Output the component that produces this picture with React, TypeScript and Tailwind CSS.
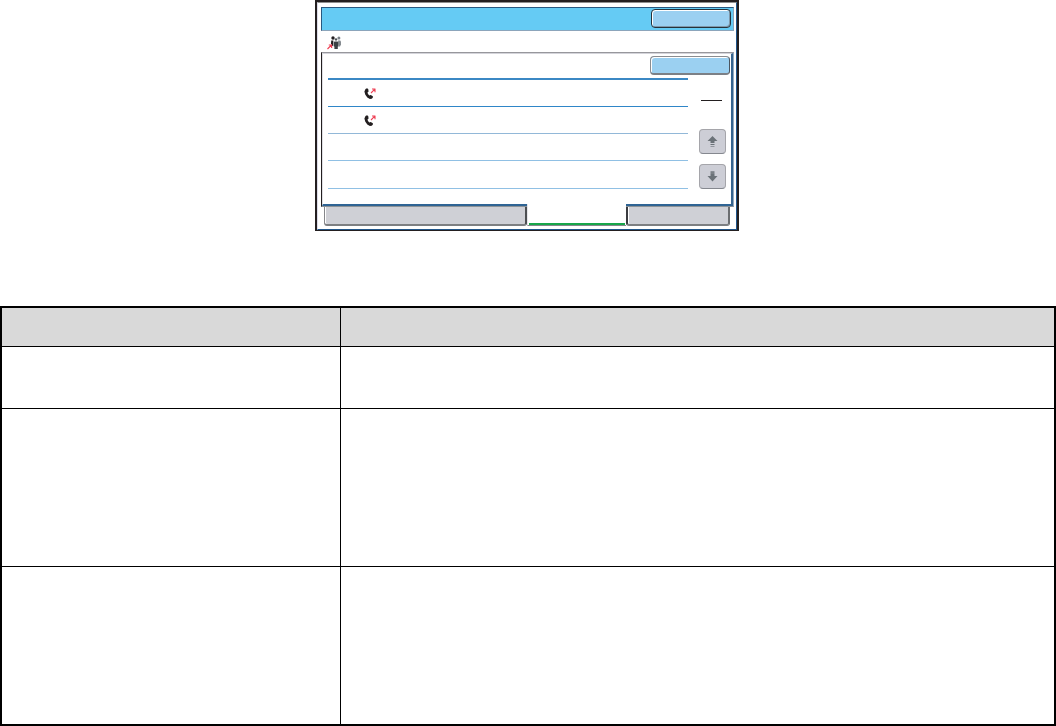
import type { ReactNode } from 'react';

interface KeyProps {
    label: string;
    className?: string;
}

// Glossy blue key in the header and list area
function BlueKey({ label, className = '' }: KeyProps) {
    return (
        <button
            type="button"
            aria-label={label}
            className={`block h-[19px] w-20 shrink-0 rounded-[4px] border bg-[#9bd0f1] ${className}`}
        />
    );
}

function ScrollKey({ label, children }: { label: string; children: ReactNode }) {
    return (
        <button
            type="button"
            aria-label={label}
            className="flex h-[25px] w-[27px] items-center justify-center rounded-[4px] border border-[#a5a5aa] border-b-[#85888f] bg-[#cdced6]"
        >
            {children}
        </button>
    );
}

function ArrowUp() {
    return (
        <svg width="11" height="11" viewBox="0 0 11 11" fill="#6b7278" aria-hidden="true">
            <path d="M5.5 0 10.5 5H7.5V7H3.5V5H.5Z" />
            <path d="M3.5 8H7.5V9H3.5Z" />
            <path d="M3.5 10H7.5V11H3.5Z" opacity=".6" />
        </svg>
    );
}

function ArrowDown() {
    return (
        <svg width="11" height="11" viewBox="0 0 11 11" fill="#6b7278" aria-hidden="true">
            <path d="M3.5 0H7.5V1H3.5Z" opacity=".7" />
            <path d="M3.5 1H7.5V3H3.5Z" opacity=".85" />
            <path d="M3.5 3H7.5V5H10.5L5.5 10.5.5 5H3.5Z" />
        </svg>
    );
}

function PhoneIcon() {
    return (
        <svg width="13" height="12" viewBox="0 0 13 12" aria-hidden="true">
            <path
                d="M1.5 1 3 .3 4.2 1 4.6 3.4 3.5 4.6 4 6.1 5.3 7.6 6.7 7 8.9 8.3 8.8 9.7 7.7 10.7 5.9 10.9 3.3 9.4 1.2 6.6.4 3.6Z"
                fill="#231f20"
            />
            <path d="M7 5 10.8 1.2M8 1H11.3M11 .8V4.2" fill="none" stroke="#ee4055" strokeWidth="1.1" />
        </svg>
    );
}

function GroupIcon() {
    return (
        <svg width="15" height="14" viewBox="0 0 15 14" aria-hidden="true">
            <circle cx="11.9" cy="2" r="1.5" fill="#7b8288" />
            <path d="M11 4.4H13.2L14 5.5V8.5L13 10.5H11.6Z" fill="#858b90" />
            <circle cx="6" cy="2" r="1.7" fill="#231f20" />
            <path d="M4.2 4.4H6.4L6.2 10H5.4L4 7.5Z" fill="#231f20" />
            <circle cx="9" cy="3.4" r="1.2" fill="#4a5054" />
            <path d="M7.4 5.6H10.6L11.4 6.6V10.6H10.8V13H7.4V10.6H6.8V6.6Z" fill="#3c4245" />
            <path d="M.5 13 4.3 9.2M1.8 9H5M4.6 8.8V12" fill="none" stroke="#ee4055" strokeWidth="1.2" />
        </svg>
    );
}

const listRows = [
    { hasCall: true, className: 'h-[27px] border-[#2f86c8]' },
    { hasCall: true, className: 'h-[27px] border-[#92b8d8]' },
    { hasCall: false, className: 'h-[27px] border-[#90c0e4]' },
    { hasCall: false, className: 'h-7 border-[#90c0e4]' },
];

function DeviceScreen() {
    return (
        <section className="w-full max-w-[424px] border-2 border-b border-[#231f20] bg-white">
            <div className="border border-t-[#8f8f8f] border-r-[#1f5489] border-b-[#1f5489] border-l-[#dcdce8]">
                <div className="pt-1 pr-0.5 pb-[3px] pl-[3px]">
                    <header className="flex h-6 items-start justify-end border border-t-[#285880] border-r-[#8ca5bb] border-b-[#8ca5bb] border-l-[#285880] bg-[#65cbf4] pt-px pr-0.5">
                        <BlueKey
                            label="Close"
                            className="border-[#25323c] shadow-[inset_1px_1px_0_#ffffff,inset_-1px_-1px_0_#7f98aa]"
                        />
                    </header>

                    <div className="flex h-[21px] items-start pt-[5px] pl-1.5">
                        <GroupIcon />
                    </div>

                    <div className="border border-t-[#97979c] border-r-[#94abc0] border-b-[#8c9297] border-l-[#231f20]">
                        <div className="flex h-[153px] w-full justify-between border-t border-r-2 border-b-2 border-l border-t-[#d4d4da] border-r-[#36648f] border-b-[#2f6494] border-l-[#dfdfe4] pr-px pl-[5px]">
                            <ul className="h-[135px] grow">
                                <li className="h-[26px] border-b-2 border-[#3b88c4]" />
                                {listRows.map((row, i) => (
                                    <li key={i} className={`flex items-start border-b pt-2 pl-9 ${row.className}`}>
                                        {row.hasCall && <PhoneIcon />}
                                    </li>
                                ))}
                            </ul>
                            {/* Wider than the gap to the list so the key overhangs it */}
                            <div className="-ml-[38px] flex w-20 flex-col items-end pt-0.5">
                                <BlueKey
                                    label="Details"
                                    className="border-b-2 border-t-[#8a8c90] border-r-[#4c5660] border-b-[#7c8086] border-l-[#8a8c90] shadow-[inset_1px_1px_0_#ffffff]"
                                />
                                <div className="mt-[25px] mr-2 h-px w-[21px] bg-[#231f20]" />
                                <div className="mt-7 mr-1 flex flex-col gap-[10px]">
                                    <ScrollKey label="Scroll up">
                                        <ArrowUp />
                                    </ScrollKey>
                                    <ScrollKey label="Scroll down">
                                        <ArrowDown />
                                    </ScrollKey>
                                </div>
                            </div>
                        </div>
                    </div>

                    <div role="tablist" className="-mt-[3px] flex h-[22px] pr-1 pl-[3px]">
                        <button
                            type="button"
                            role="tab"
                            aria-selected="false"
                            aria-label="First tab"
                            className="mt-[3px] grow rounded-b-[3px] border-r-2 border-b-2 border-l border-r-[#4d4f52] border-b-[#7d7f82] border-l-[#85868a] bg-[#cfd0d6] shadow-[inset_1px_0_0_#ffffff]"
                        />
                        <button
                            type="button"
                            role="tab"
                            aria-selected="true"
                            aria-label="Second tab"
                            className="relative flex w-[99px] items-end border-b border-l border-b-[#85868a] border-l-[#e6e6ea] bg-white px-px"
                        >
                            <span className="block h-[2px] w-full bg-[#19a64a]" />
                        </button>
                        <button
                            type="button"
                            role="tab"
                            aria-selected="false"
                            aria-label="Third tab"
                            className="mt-[3px] w-[104px] rounded-b-[3px] border-r-2 border-b-2 border-l-2 border-r-[#6b6d70] border-b-[#7d7f82] border-l-[#3a3c40] bg-[#cfd0d6] shadow-[inset_1px_0_0_#ffffff]"
                        />
                    </div>
                </div>
            </div>
        </section>
    );
}

const tableRows = ['h-[62px]', 'h-[158px]', 'h-[157px]'];

function DescriptionTable() {
    return (
        <table className="w-full table-fixed border-separate border-spacing-0 border-2 border-black">
            <thead>
                <tr className="h-[39px] bg-[#d9d9d9]">
                    <th scope="col" className="w-[339px] border-r border-b border-black" />
                    <th scope="col" className="border-b border-black" />
                </tr>
            </thead>
            <tbody>
                {tableRows.map((height, i) => (
                    <tr key={height} className={height}>
                        <td className={`border-r border-black ${i < tableRows.length - 1 ? 'border-b' : ''}`} />
                        <td className={`border-black ${i < tableRows.length - 1 ? 'border-b' : ''}`} />
                    </tr>
                ))}
            </tbody>
        </table>
    );
}

export default function App() {
    return (
        <main className="bg-white font-['Liberation_Sans',sans-serif]">
            <div className="flex justify-center pr-0.5">
                <DeviceScreen />
            </div>
            <div className="mt-[75px]">
                <DescriptionTable />
            </div>
        </main>
    );
}
